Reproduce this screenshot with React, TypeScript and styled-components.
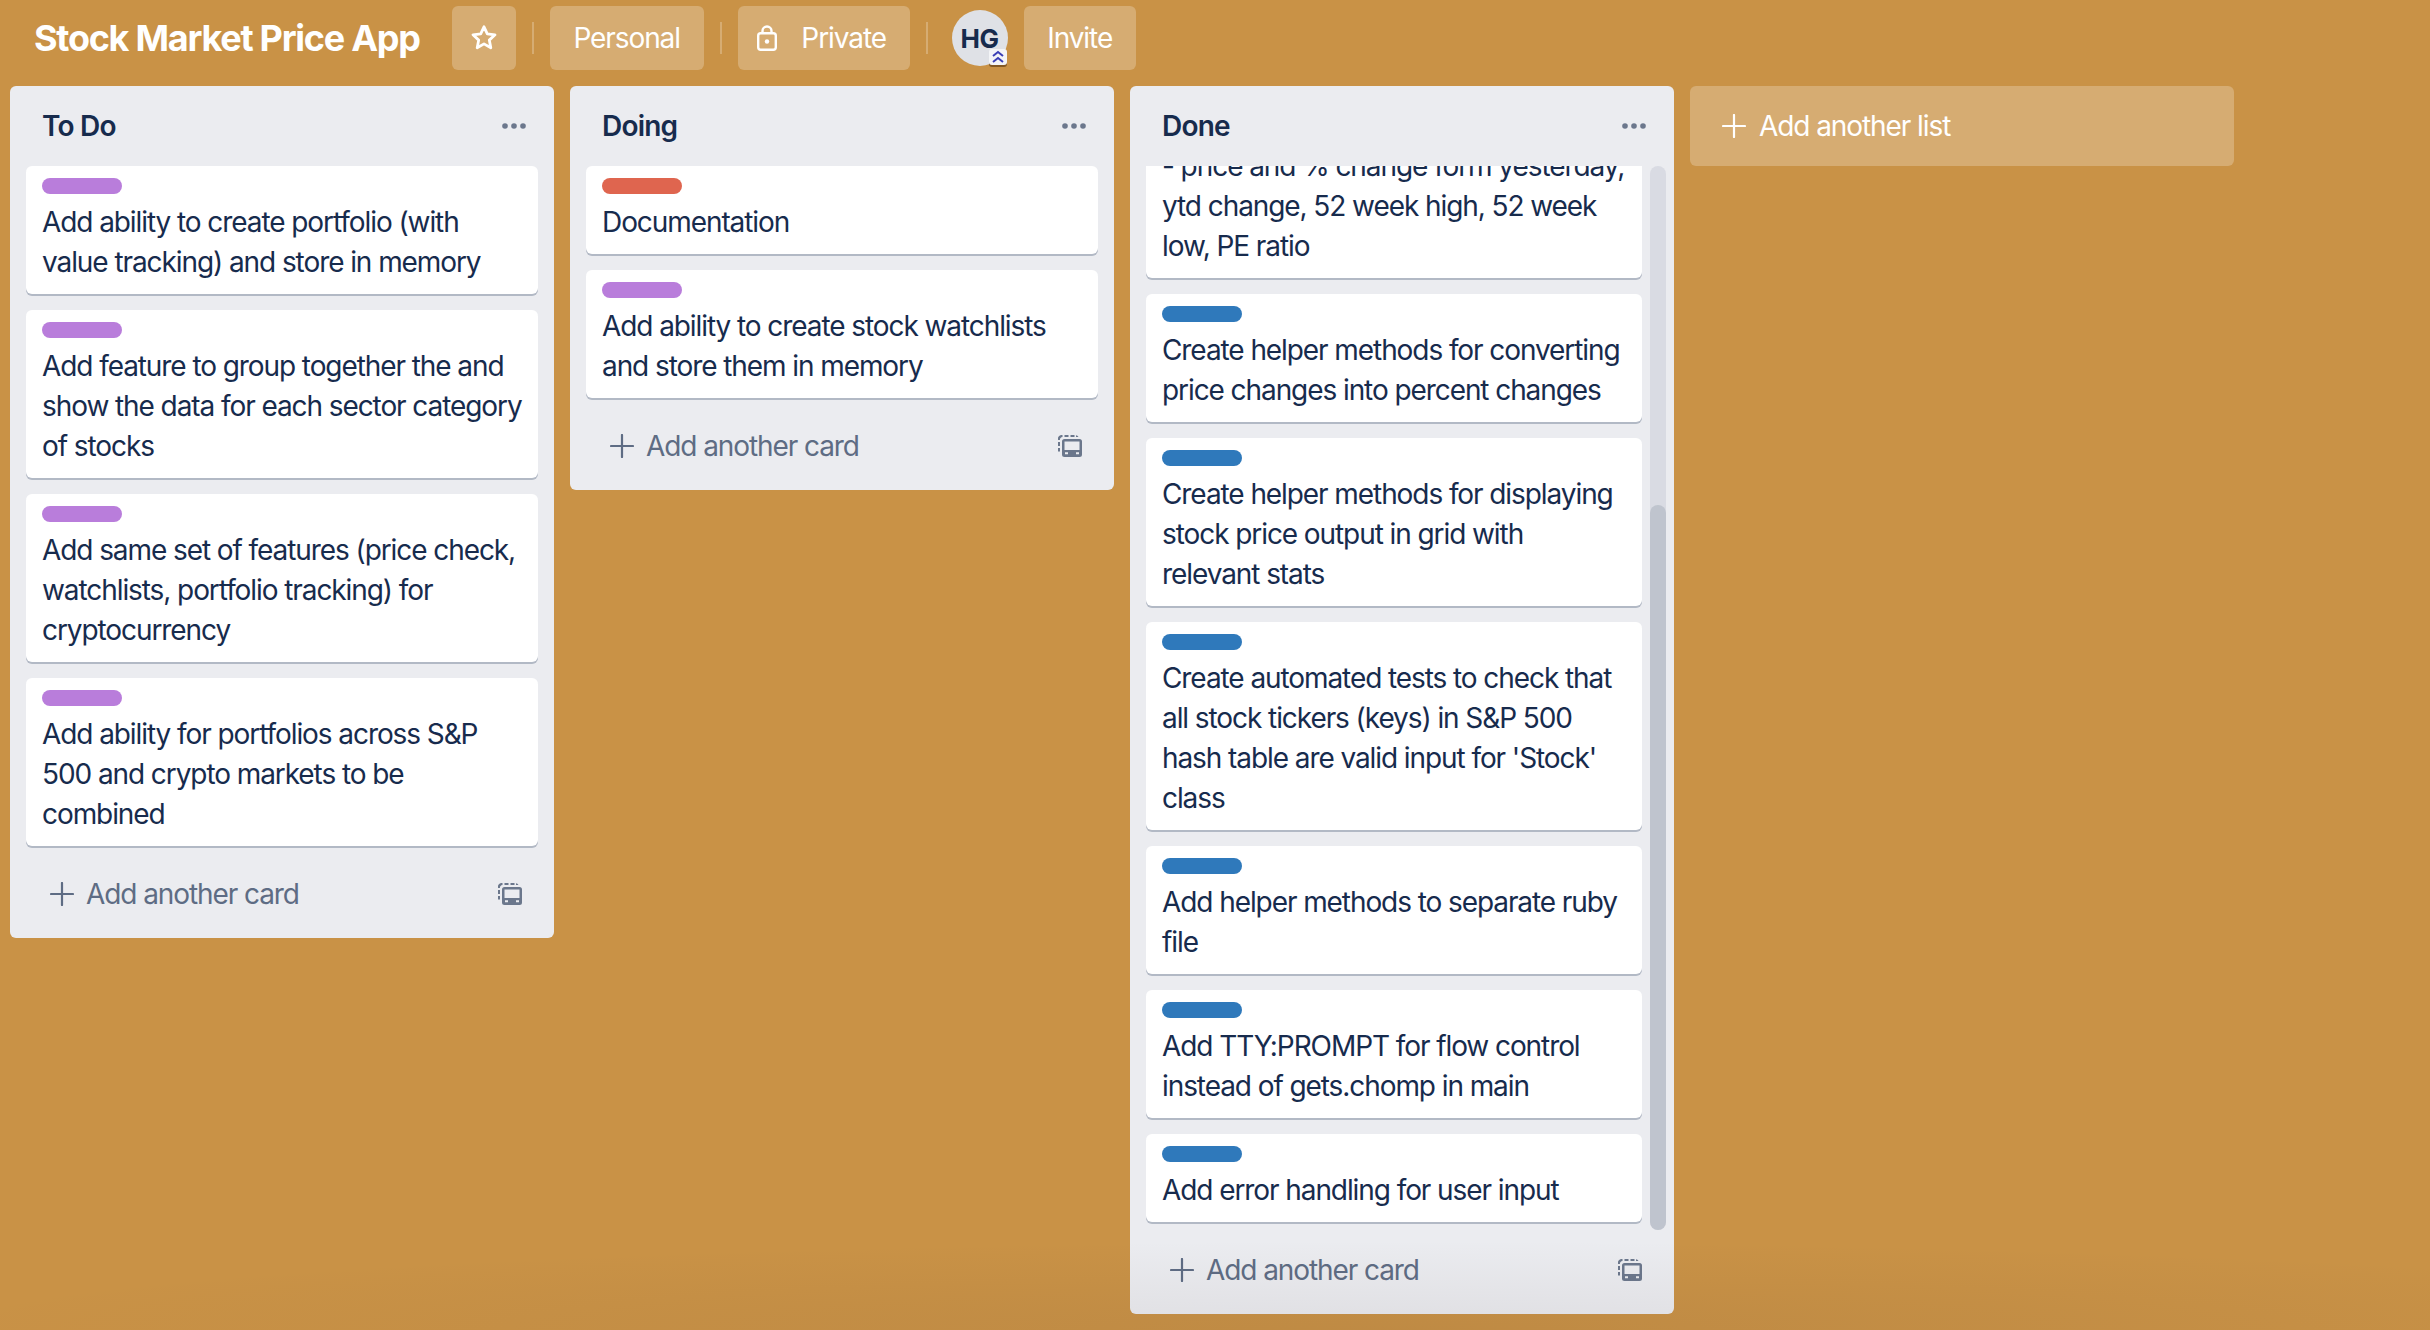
import styled, { createGlobalStyle } from "styled-components";

const GlobalStyle = createGlobalStyle`
  html, body {
    margin: 0;
    padding: 0;
    height: 100%;
  }

  body {
    background: #c99246;
    font-family: Inter, "Liberation Sans", sans-serif;
    letter-spacing: -1.08px;
    overflow: hidden;
  }
`;

const Page = styled.div`
  position: relative;
  height: 1330px;
  overflow: hidden;
`;

const BottomShade = styled.div`
  position: absolute;
  left: 0;
  right: 0;
  bottom: 0;
  height: 100px;
  background: radial-gradient(ellipse 1500px 90px at 1400px 100%, rgba(60, 40, 40, 0.07), rgba(60, 40, 40, 0));
  pointer-events: none;
`;

const BoardHeader = styled.header`
  display: flex;
  align-items: center;
  height: 64px;
  padding: 6px 0 16px 34px;
`;

const BoardTitle = styled.h1`
  margin: 0 32px 0 0;
  font-size: 36px;
  line-height: 64px;
  font-weight: 700;
  letter-spacing: -1.26px;
  color: #fff;
  white-space: nowrap;
`;

const HeaderButton = styled.button<{ $width: number; $gap?: number }>`
  display: flex;
  align-items: center;
  justify-content: center;
  gap: ${({ $gap }) => $gap ?? 0}px;
  width: ${({ $width }) => $width}px;
  height: 64px;
  padding: 0;
  border: none;
  border-radius: 6px;
  background: rgba(255, 255, 255, 0.24);
  color: #fff;
  font: inherit;
  font-size: 28px;
  letter-spacing: inherit;
`;

const PrivateButton = styled(HeaderButton)`
  padding-right: 4px;
`;

const Divider = styled.span`
  width: 2px;
  height: 32px;
  margin: 0 16px;
  background: rgba(255, 255, 255, 0.24);
`;

const Avatar = styled.div`
  position: relative;
  display: flex;
  align-items: center;
  justify-content: center;
  width: 56px;
  height: 56px;
  margin: 0 16px 0 8px;
  border-radius: 50%;
  background: #dfe1e6;
  color: #172b4d;
  font-size: 26px;
  font-weight: 700;
  letter-spacing: -0.4px;
`;

const AdminBadge = styled.svg`
  position: absolute;
  right: 1px;
  bottom: 1px;
  filter: drop-shadow(0 2px 0 rgba(60, 30, 0, 0.5));
`;

const Board = styled.main`
  display: flex;
  align-items: flex-start;
  gap: 16px;
  padding: 0 10px;
`;

const List = styled.section`
  display: flex;
  flex-direction: column;
  width: 544px;
  border-radius: 6px;
  background: #ebecf0;
`;

const ListHeader = styled.div`
  display: flex;
  align-items: center;
  justify-content: space-between;
  height: 80px;
  padding: 0 28px 0 32px;
  box-sizing: border-box;
`;

const ListTitle = styled.h2`
  margin: 0;
  font-size: 28px;
  font-weight: 600;
  letter-spacing: -0.8px;
  color: #172b4d;
`;

const MoreDots = styled.svg`
  color: #6b778c;
`;

const Cards = styled.div`
  display: flex;
  flex-direction: column;
  gap: 16px;
  padding: 0 16px 8px;
`;

const ScrollArea = styled.div`
  display: flex;
  gap: 8px;
  height: 1064px;
  padding: 0 8px 0 16px;
`;

const ClippedCards = styled(Cards)`
  flex: 1;
  padding: 0;
  overflow: hidden;
`;

const ScrollTrack = styled.div`
  flex: none;
  width: 16px;
  border-radius: 8px;
  background: #d9dbe3;
`;

const ScrollThumb = styled.div<{ $top: number }>`
  height: calc(100% - ${({ $top }) => $top}px);
  margin-top: ${({ $top }) => $top}px;
  border-radius: 8px;
  background: #bfc4ce;
`;

const Card = styled.article<{ $scrolled?: boolean }>`
  flex: none;
  padding: 12px 16px;
  margin-top: ${({ $scrolled }) => ($scrolled ? "-32px" : "0")};
  border-radius: 6px;
  background: #fff;
  box-shadow: 0 2px 0 rgba(9, 30, 66, 0.25);
`;

const Label = styled.div<{ $color: string }>`
  width: 80px;
  height: 16px;
  margin-bottom: 8px;
  border-radius: 8px;
  background: ${({ $color }) => $color};
`;

const CardText = styled.p`
  margin: 0;
  font-size: 28px;
  line-height: 40px;
  color: #172b4d;
`;

const ListFooter = styled.div`
  display: flex;
  align-items: center;
  justify-content: space-between;
  height: 76px;
  margin-top: 8px;
  padding: 0 32px 12px 40px;
  box-sizing: border-box;
`;

const AddCard = styled.div`
  display: flex;
  align-items: center;
  gap: 12px;
  font-size: 28px;
  color: #5e6c84;
`;

const TemplateIcon = styled.svg`
  color: #6b778c;
`;

const AddListButton = styled.div`
  display: flex;
  align-items: center;
  gap: 13px;
  width: 544px;
  height: 80px;
  padding-left: 32px;
  box-sizing: border-box;
  border-radius: 6px;
  background: rgba(255, 255, 255, 0.24);
  color: #fff;
  font-size: 28px;
`;

const PURPLE = "#b97ddb";
const RED = "#df654f";
const BLUE = "#2f79bb";

interface CardData {
  color?: string;
  text: string;
}

const todoCards: CardData[] = [
  { color: PURPLE, text: "Add ability to create portfolio (with value tracking) and store in memory" },
  { color: PURPLE, text: "Add feature to group together the and show the data for each sector category of stocks" },
  { color: PURPLE, text: "Add same set of features (price check, watchlists, portfolio tracking) for cryptocurrency" },
  { color: PURPLE, text: "Add ability for portfolios across S&P 500 and crypto markets to be combined" },
];

const doingCards: CardData[] = [
  { color: RED, text: "Documentation" },
  { color: PURPLE, text: "Add ability to create stock watchlists and store them in memory" },
];

const doneCards: CardData[] = [
  { color: BLUE, text: "Create helper methods for converting price changes into percent changes" },
  { color: BLUE, text: "Create helper methods for displaying stock price output in grid with relevant stats" },
  { color: BLUE, text: "Create automated tests to check that all stock tickers (keys) in S&P 500 hash table are valid input for 'Stock' class" },
  { color: BLUE, text: "Add helper methods to separate ruby file" },
  { color: BLUE, text: "Add TTY:PROMPT for flow control instead of gets.chomp in main" },
  { color: BLUE, text: "Add error handling for user input" },
];

function PlusIcon() {
  return (
    <svg width="24" height="24" viewBox="0 0 24 24" fill="none">
      <path d="M12 1v22M1 12h22" stroke="currentColor" strokeWidth="2.2" strokeLinecap="round" />
    </svg>
  );
}

function StarIcon() {
  return (
    <svg width="28" height="28" viewBox="0 0 28 28" fill="none">
      <path
        d="M14 2.800l3.300 7.100 7.700.9-5.700 5.300 1.500 7.700-6.800-3.900-6.800 3.900 1.500-7.700L3 10.800l7.700-.9z"
        stroke="#fff"
        strokeWidth="2.800"
        strokeLinejoin="round"
      />
    </svg>
  );
}

function LockIcon() {
  return (
    <svg width="20" height="26" viewBox="0 0 20 26" fill="none">
      <rect x="1.200" y="8.200" width="17.600" height="16.600" rx="2.500" stroke="#fff" strokeWidth="2.400" />
      <path d="M5.500 8V6a4.500 4.500 0 0 1 9 0v2" stroke="#fff" strokeWidth="2.400" />
      <circle cx="10" cy="16.500" r="2.200" fill="#fff" />
    </svg>
  );
}

function CardItem({ card }: { card: CardData }) {
  return (
    <Card>
      {card.color && <Label $color={card.color} />}
      <CardText>{card.text}</CardText>
    </Card>
  );
}

function Footer() {
  return (
    <ListFooter>
      <AddCard>
        <PlusIcon />
        Add another card
      </AddCard>
      <TemplateIcon width="24" height="22" viewBox="0 0 24 22" fill="currentColor">
        <path d="M6.500 0h4v2h-4zM12.500 0h4v2h-4zM18 .2A3.500 3.500 0 0 1 20.500 2h-2.500zM0 5a4 4 0 0 1 4.500-5v2A2.500 2.500 0 0 0 2 5zM0 7h2v4H0zM0 13h2v3.500H0z" />
        <path
          fillRule="evenodd"
          d="M6.500 4h15A2.500 2.500 0 0 1 24 6.500v13a2.500 2.500 0 0 1-2.500 2.500h-15A2.500 2.500 0 0 1 4 19.500v-13A2.500 2.500 0 0 1 6.500 4zM6.500 6.500v8.500h15V6.500zM7 17.200v2h3v-2zM18 17.200v2h3v-2z"
        />
      </TemplateIcon>
    </ListFooter>
  );
}

function ListTop({ title }: { title: string }) {
  return (
    <ListHeader>
      <ListTitle>{title}</ListTitle>
      <MoreDots width="24" height="8" viewBox="0 0 24 8" fill="currentColor">
        <circle cx="3" cy="4" r="2.800" />
        <circle cx="12" cy="4" r="2.800" />
        <circle cx="21" cy="4" r="2.800" />
      </MoreDots>
    </ListHeader>
  );
}

export default function App() {
  return (
    <Page>
      <GlobalStyle />
      <BoardHeader>
        <BoardTitle>Stock Market Price App</BoardTitle>
        <HeaderButton $width={64} aria-label="Star">
          <StarIcon />
        </HeaderButton>
        <Divider />
        <HeaderButton $width={154}>Personal</HeaderButton>
        <Divider />
        <PrivateButton $width={172} $gap={24}>
          <LockIcon />
          Private
        </PrivateButton>
        <Divider />
        <Avatar>
          HG
          <AdminBadge width="18" height="16" viewBox="0 0 18 16">
            <rect width="18" height="16" rx="3" fill="#f4f5f7" />
            <path d="M4 7l5-4 5 4M4 13l5-4 5 4" stroke="#3b3fb5" strokeWidth="2" fill="none" />
          </AdminBadge>
        </Avatar>
        <HeaderButton $width={112}>Invite</HeaderButton>
      </BoardHeader>

      <Board>
        <List>
          <ListTop title="To Do" />
          <Cards>
            {todoCards.map((card) => (
              <CardItem key={card.text} card={card} />
            ))}
          </Cards>
          <Footer />
        </List>

        <List>
          <ListTop title="Doing" />
          <Cards>
            {doingCards.map((card) => (
              <CardItem key={card.text} card={card} />
            ))}
          </Cards>
          <Footer />
        </List>

        <List>
          <ListTop title="Done" />
          <ScrollArea>
            <ClippedCards>
              <Card $scrolled>
                <CardText>- price and % change form yesterday, ytd change, 52 week high, 52 week low, PE ratio</CardText>
              </Card>
              {doneCards.map((card) => (
                <CardItem key={card.text} card={card} />
              ))}
            </ClippedCards>
            <ScrollTrack>
              <ScrollThumb $top={339} />
            </ScrollTrack>
          </ScrollArea>
          <Footer />
        </List>

        <AddListButton>
          <PlusIcon />
          Add another list
        </AddListButton>
      </Board>
      <BottomShade />
    </Page>
  );
}
